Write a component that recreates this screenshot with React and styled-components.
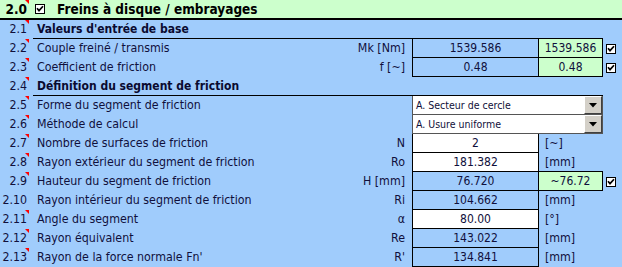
import React from 'react';
import styled, { createGlobalStyle } from 'styled-components';

const Global = createGlobalStyle`
  html, body { margin: 0; padding: 0; background: #a0ccfc; }
  body { font-family: 'DejaVu Sans Condensed', 'DejaVu Sans', sans-serif; }
  * { box-sizing: border-box; }
`;

const Sheet = styled.div`
  width: 622px;
  height: 267px;
  overflow: hidden;
  background-color: #a0ccfc;
  color: #10103c;
  font-size: 12px;
  display: flex;
  flex-direction: column;
`;

const TitleRow = styled.div`
  height: 20px;
  background: #ccffcc;
  border-bottom: 2px solid #000;
  display: grid;
  grid-template-columns: 33px 24px 1fr;
  align-items: center;
  color: #000;
  font-weight: bold;
`;

const TitleNum = styled.div`
  position: relative;
  height: 18px;
  line-height: 18px;
  text-align: right;
  padding-right: 6px;
  font-size: 13.5px;
`;

const TitleText = styled.div`
  font-size: 13.5px;
  line-height: 18px;
  white-space: nowrap;
`;

const Row = styled.div`
  height: 19px;
  display: grid;
  grid-template-columns: 33px 1fr 127px 64px 19px;
`;

const NumCell = styled.div`
  position: relative;
  height: 18px;
  line-height: 18px;
  text-align: right;
  padding-right: 6px;
  font-size: 12.3px;
  white-space: nowrap;
`;

const Marker = styled.span`
  position: absolute;
  top: 0;
  right: 4px;
  width: 0;
  height: 0;
  border-top: 4px solid #ff0000;
  border-left: 4px solid transparent;
`;

const LabelCell = styled.div`
  display: flex;
  justify-content: space-between;
  height: 18px;
  line-height: 18px;
  padding: 0 7px 0 4px;
  font-size: 12.3px;
  white-space: nowrap;
`;

const SectionCell = styled.div`
  grid-column: 2 / 5;
  height: 19px;
  line-height: 18px;
  padding-left: 4px;
  border-bottom: 1px solid #000;
  font-weight: bold;
  color: #0a0a30;
  white-space: nowrap;
`;

const ValueCell = styled.div`
  height: 19px;
  line-height: 18px;
  text-align: center;
  border-left: 1px solid #000;
  border-right: 1px solid #000;
  border-bottom: 1px solid #000;
  background: ${p => (p.$input ? '#ffffff' : 'transparent')};
`;

const GreenCell = styled.div`
  height: ${p => (p.$top ? '20px' : '19px')};
  margin-top: ${p => (p.$top ? '-1px' : '0')};
  line-height: 18px;
  text-align: center;
  background: #ccffcc;
  border-right: 1px solid #000;
  border-bottom: 1px solid #000;
  border-top: ${p => (p.$top ? '1px solid #000' : 'none')};
`;

const UnitCell = styled.div`
  height: 18px;
  line-height: 18px;
  padding-left: 6px;
  font-size: 12.3px;
  white-space: nowrap;
`;

const CheckCell = styled.div`
  display: flex;
  align-items: center;
  padding-left: 3px;
  height: 19px;
`;

const TitleCheck = styled.div`
  display: flex;
  padding-left: 2px;
`;

const Select = styled.div`
  grid-column: 3 / 5;
  height: 19px;
  display: flex;
  background: #fff;
  border-left: 1px solid #555;
  border-right: 1px solid #555;
  border-bottom: 1px solid #555;
`;

const SelectText = styled.div`
  flex: 1;
  font-size: 10.5px;
  line-height: 18px;
  padding-left: 3px;
  color: #10103a;
  white-space: nowrap;
`;

const SelectButton = styled.div`
  width: 18px;
  height: 18px;
  background: #d4d0c8;
  border-top: 1px solid #fff;
  border-left: 1px solid #fff;
  border-right: 1px solid #404040;
  border-bottom: 1px solid #404040;
  display: flex;
  align-items: center;
  justify-content: center;
`;

const Check = () => (
  <svg width="10" height="10" viewBox="0 0 10 10">
    <rect x="0.5" y="0.5" width="9" height="9" fill="#fff" stroke="#000" />
    <path d="M2 4.3 L4 6.6 L8 2.2" stroke="#000" strokeWidth="1.7" fill="none" />
  </svg>
);

const Arrow = () => (
  <svg width="8" height="5" viewBox="0 0 8 5">
    <path d="M0 0 H8 L4 4.5 Z" fill="#000" />
  </svg>
);

const rows = [
  { n: '2.1', type: 'section', label: "Valeurs d'entrée de base" },
  { n: '2.2', label: 'Couple freiné / transmis', sym: 'Mk [Nm]', value: '1539.586', green: '1539.586', check: true },
  { n: '2.3', label: 'Coefficient de friction', sym: 'f [~]', value: '0.48', green: '0.48', check: true },
  { n: '2.4', type: 'section', label: 'Définition du segment de friction' },
  { n: '2.5', label: 'Forme du segment de friction', select: 'A. Secteur de cercle' },
  { n: '2.6', label: 'Méthode de calcul', select: 'A. Usure uniforme' },
  { n: '2.7', label: 'Nombre de surfaces de friction', sym: 'N', value: '2', input: true, unit: '[~]' },
  { n: '2.8', label: 'Rayon extérieur du segment de friction', sym: 'Ro', value: '181.382', input: true, unit: '[mm]' },
  { n: '2.9', label: 'Hauteur du segment de friction', sym: 'H [mm]', value: '76.720', green: '~76.72', greenTop: true, check: true },
  { n: '2.10', label: 'Rayon intérieur du segment de friction', sym: 'Ri', value: '104.662', unit: '[mm]', noMarker: true },
  { n: '2.11', label: 'Angle du segment', sym: 'α', value: '80.00', input: true, unit: '[°]' },
  { n: '2.12', label: 'Rayon équivalent', sym: 'Re', value: '143.022', unit: '[mm]' },
  { n: '2.13', label: "Rayon de la force normale Fn'", sym: "R'", value: '134.841', unit: '[mm]' },
];

export default function App() {
  return (
    <>
      <Global />
      <Sheet>
        <TitleRow>
          <TitleNum>2.0<Marker /></TitleNum>
          <TitleCheck><Check /></TitleCheck>
          <TitleText>Freins à disque / embrayages</TitleText>
        </TitleRow>
        {rows.map(r => (
          <Row key={r.n}>
            <NumCell>
              {r.n}
              {!r.noMarker && <Marker />}
            </NumCell>
            {r.type === 'section' ? (
              <SectionCell>{r.label}</SectionCell>
            ) : (
              <>
                <LabelCell>
                  <span>{r.label}</span>
                  <span>{r.sym}</span>
                </LabelCell>
                {r.select ? (
                  <Select>
                    <SelectText>{r.select}</SelectText>
                    <SelectButton><Arrow /></SelectButton>
                  </Select>
                ) : (
                  <>
                    <ValueCell $input={r.input}>{r.value}</ValueCell>
                    {r.green ? (
                      <GreenCell $top={r.greenTop}>{r.green}</GreenCell>
                    ) : (
                      <UnitCell>{r.unit}</UnitCell>
                    )}
                  </>
                )}
                <CheckCell>{r.check && <Check />}</CheckCell>
              </>
            )}
          </Row>
        ))}
      </Sheet>
    </>
  );
}
